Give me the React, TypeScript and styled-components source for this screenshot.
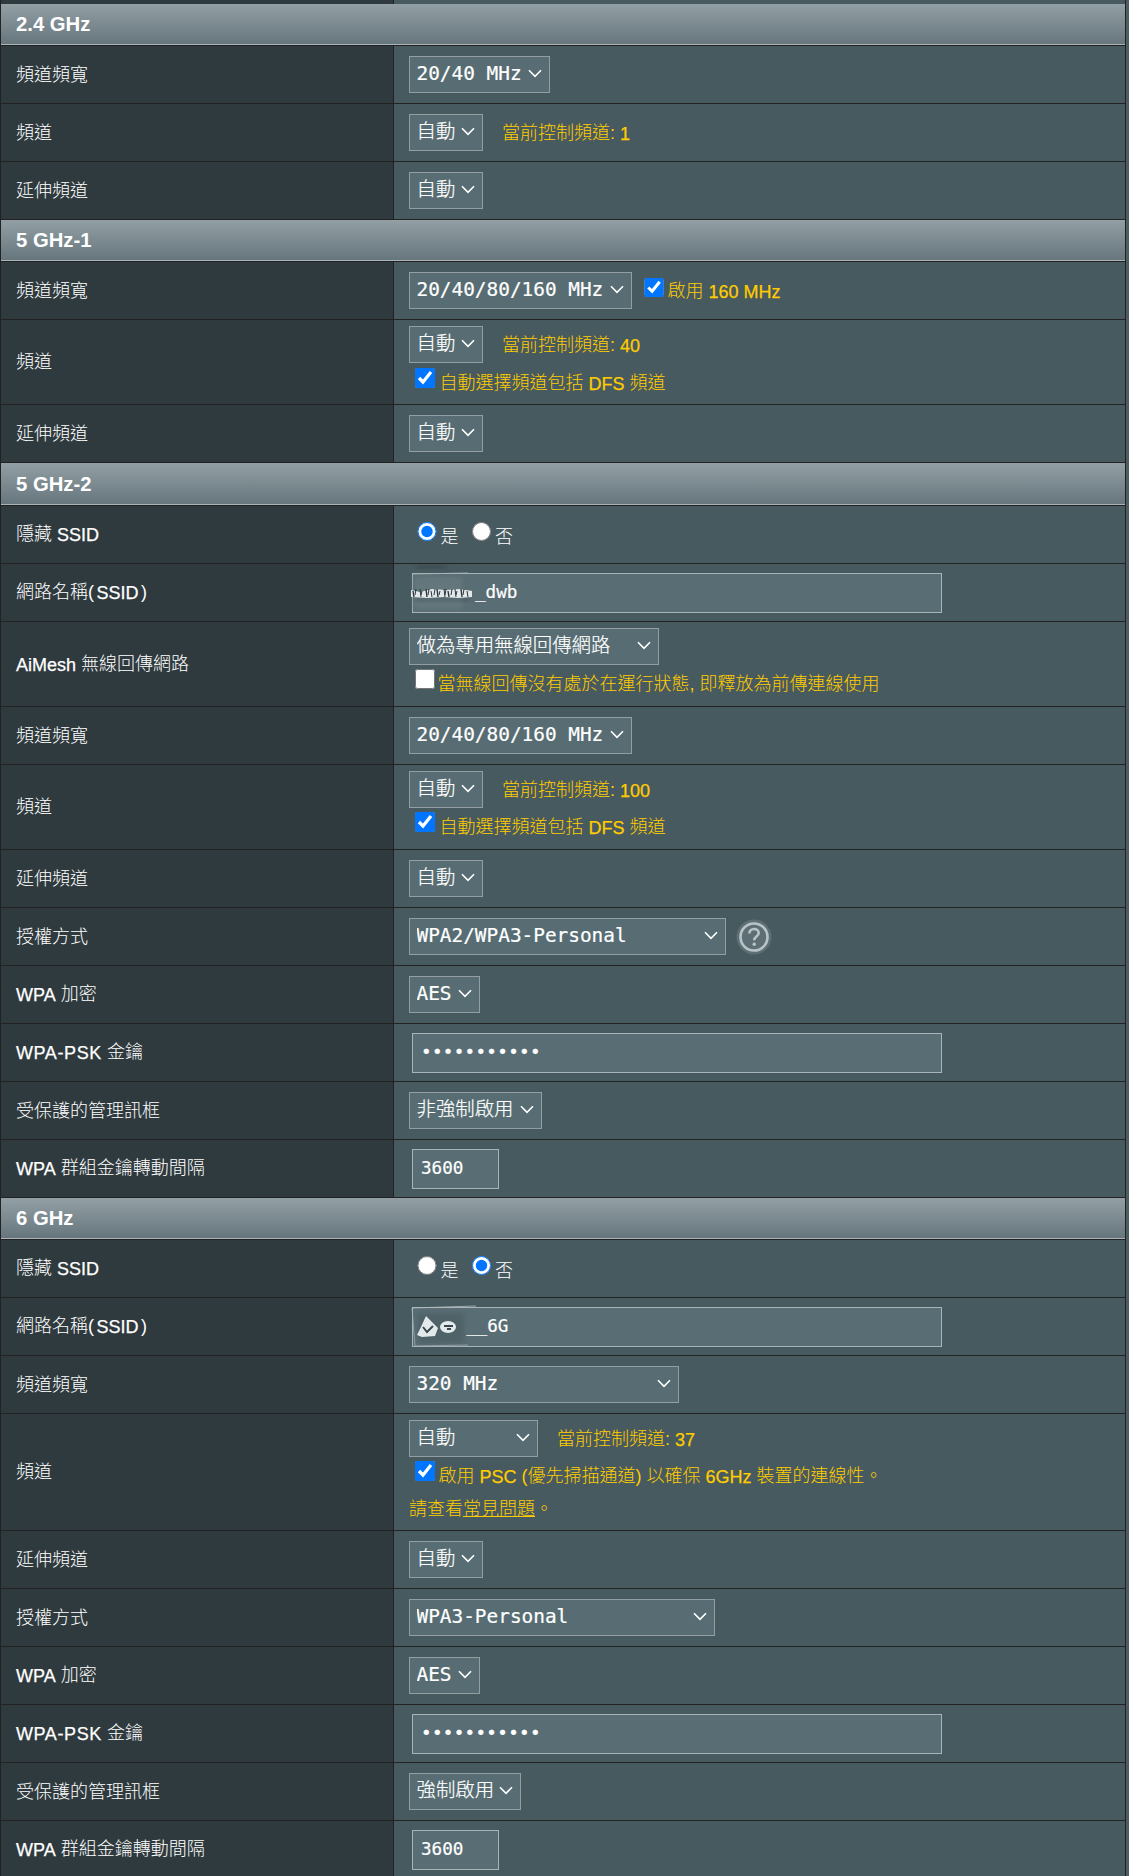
import React from "react";
import styled, { createGlobalStyle } from "styled-components";

const chevron =
  "data:image/svg+xml,%3Csvg xmlns='http://www.w3.org/2000/svg' width='14' height='9' viewBox='0 0 14 9'%3E%3Cpath d='M1 1.2 L7 7.4 L13 1.2' fill='none' stroke='%23ffffff' stroke-width='1.6'/%3E%3C/svg%3E";

const Global = createGlobalStyle`
  html, body { margin: 0; padding: 0; background: #4D5E63; }
  body { width: 1129px; height: 1876px; overflow: hidden; }
`;

const Frame = styled.div`
  width: 1126px;
  height: 1876px;
  overflow: hidden;
  box-sizing: border-box;
  border-left: 1px solid #222;
  border-right: 1px solid #222;
  font-family: "Liberation Sans", "Noto Sans CJK TC", sans-serif;
  font-size: 18px;
  font-weight: 300;
  color: #fff;
`;

const RowBox = styled.div<{ $h: number }>`
  display: grid;
  grid-template-columns: 393px 1fr;
  height: ${(p) => p.$h}px;
  box-sizing: border-box;
  border-bottom: 1px solid #222;
`;

const Label = styled.div`
  display: flex;
  align-items: baseline;
  align-content: center;
  flex-wrap: wrap;
  padding: 0 0 4px 15px;
  background: #2f3a3e;
  border-right: 1px solid #222;
  white-space: pre;
`;

const Value = styled.div<{ $tall?: boolean }>`
  display: flex;
  flex-direction: column;
  justify-content: ${(p) => (p.$tall ? "flex-start" : "center")};
  align-items: flex-start;
  padding: ${(p) => (p.$tall ? "6px" : "0")} 0 0 15px;
  background: #475a5f;
`;

const Line = styled.div`
  display: flex;
  align-items: center;
`;

const Header = styled.div<{ $h?: number }>`
  display: flex;
  align-items: center;
  height: ${(p) => p.$h ?? 42}px;
  box-sizing: border-box;
  padding: 0 0 0 15px;
  background: linear-gradient(#92a0a5, #66757c);
  border-bottom: 1px solid #222;
  box-shadow: inset 0 -1px 0 #a9b4b8;
  font-size: 20.3px;
  font-weight: bold;
  color: #fff;
`;

const Select = styled.select<{ $w: number }>`
  appearance: none;
  width: ${(p) => p.$w}px;
  height: 37px;
  box-sizing: border-box;
  margin: 0;
  padding: 0 0 2px 6.5px;
  border: 1px solid #929ea1;
  border-radius: 0;
  outline: none;
  color: #fff;
  background: #576d73 url("${chevron}") no-repeat right 7px top 12px;
  font-family: "DejaVu Sans Mono", "Noto Sans CJK TC", monospace;
  font-size: 19.4px;
  font-weight: 300;
  -webkit-text-stroke: 0.2px #fff;
`;

const InputWrap = styled.div<{ $w: number }>`
  position: relative;
  width: ${(p) => p.$w}px;
  margin-left: 3px;
`;

const TextInput = styled.input<{ $pad?: number; $ls?: number }>`
  display: block;
  width: 100%;
  height: 40px;
  box-sizing: border-box;
  margin: 0;
  padding: 0 0 2px ${(p) => p.$pad ?? 8}px;
  border: 1px solid #a9b4b8;
  border-radius: 0;
  outline: none;
  color: #fff;
  background: #596d74;
  font-family: "DejaVu Sans Mono", monospace;
  font-size: 17.6px;
  letter-spacing: ${(p) => p.$ls ?? 0}px;
  -webkit-text-stroke: 0.2px #fff;
`;

const Smudge = styled.svg`
  position: absolute;
  left: -4px;
  top: -12px;
  overflow: visible;
  pointer-events: none;
`;

const Note = styled.span<{ $ml?: number; $up?: number }>`
  color: #ffcc00;
  margin-left: ${(p) => p.$ml ?? 0}px;
  margin-bottom: ${(p) => p.$up ?? 0}px;
  white-space: pre;
`;

const Lat = styled.span<{ $ls?: number; $px?: number }>`
  -webkit-text-stroke: 0.25px currentColor;
  letter-spacing: ${(p) => p.$ls ?? 0}px;
  padding: 0 ${(p) => p.$px ?? 0}px;
  vertical-align: -1px;
`;

const Check = styled.input.attrs({ type: "checkbox" })<{ $mr?: number; $ml?: number }>`
  width: 19.5px;
  height: 19.5px;
  flex: none;
  margin: 0 ${(p) => p.$mr ?? 5}px 6px ${(p) => p.$ml ?? 6}px;
`;

const Radio = styled.input.attrs({ type: "radio" })<{ $ml?: number }>`
  width: 19.5px;
  height: 19.5px;
  flex: none;
  margin: 0 4px 6px ${(p) => p.$ml ?? 8}px;
`;

const RadioText = styled.span`
  color: #fff;
`;

const Stacked = styled(Line)<{ $mt: number }>`
  margin-top: ${(p) => p.$mt}px;
  height: 24px;
`;

const Link = styled.a`
  color: #ffcc00;
  text-decoration: underline;
`;

const HelpIcon = styled.svg`
  margin-left: 10px;
  flex: none;
`;

const Row = ({ label, h = 58, tall, children }: { label?: React.ReactNode; h?: number; tall?: boolean; children?: React.ReactNode }) => (
  <RowBox $h={h}>
    <Label><span>{label}</span></Label>
    <Value $tall={tall}>{children}</Value>
  </RowBox>
);

const Sel = ({ w, v }: { w: number; v: string }) => (
  <Select $w={w} defaultValue={v}>
    <option>{v}</option>
  </Select>
);

const Auto = ({ w = 74 }: { w?: number }) => <Sel w={w} v="自動" />;

const Channel = ({ n, w }: { n: string; w?: number }) => (
  <Line>
    <Auto w={w} />
    <Note $ml={19} $up={3}>
      當前控制頻道: <Lat>{n}</Lat>
    </Note>
  </Line>
);

const Dfs = ({ mt = 5 }: { mt?: number }) => (
  <Stacked $mt={mt}>
    <Check defaultChecked />
    <Note>
      自動選擇頻道包括 <Lat>DFS</Lat> 頻道
    </Note>
  </Stacked>
);

const Help = () => (
  <HelpIcon width="36" height="36" viewBox="0 0 36 36">
    <circle cx="18" cy="18" r="17.5" fill="#5d6f74" />
    <circle cx="18" cy="18" r="13.5" fill="none" stroke="#b9c4c7" strokeWidth="2.6" />
    <path d="M13.4 14.6c0-2.8 2-4.6 4.7-4.6s4.6 1.7 4.6 4c0 3.6-4.5 3.6-4.5 7.2" fill="none" stroke="#b9c4c7" strokeWidth="2.6" />
    <circle cx="18.2" cy="25.2" r="1.7" fill="#b9c4c7" />
  </HelpIcon>
);

const jag = [4, 7, 11, 13, 17, 20, 22, 26, 28, 31, 35, 37, 39, 43, 46, 48, 52, 55, 58];

const DwbSmudge = () => (
  <Smudge width="74" height="66" viewBox="0 0 74 66">
    <defs>
      <filter id="b1" x="-30%" y="-60%" width="160%" height="220%"><feGaussianBlur stdDeviation="2" /></filter>
      <filter id="b2" x="-10%" y="-60%" width="120%" height="220%"><feGaussianBlur stdDeviation="0.5" /></filter>
    </defs>
    <rect x="6" y="16" width="48" height="32" fill="#64777d" filter="url(#b1)" />
    <rect x="8" y="5" width="30" height="2" fill="#333f43" filter="url(#b1)" />
    <rect x="8" y="37" width="54" height="3" fill="#3f4f54" opacity="0.6" filter="url(#b1)" />
    <path d="M4 13 L60 12" stroke="#aab5b8" strokeWidth="1.2" opacity="0.8" filter="url(#b2)" />
    <path d="M3 50.5 L58 50.5" stroke="#c0cacc" strokeWidth="1.4" filter="url(#b2)" />
    <g filter="url(#b2)">
      <path d="M3 29 L12 31 L24 28 L38 29 L52 28 L64 30 L64 36 L50 37 L36 36 L20 37 L3 36 Z" fill="#e2e8ea" />
      {jag.map((x, i) => (
        <path
          key={x}
          d={`M${x + 1} ${i % 3 === 0 ? 30 : 28} L${x + (i % 2 ? 0 : 2)} ${i % 2 === 0 ? 36 : 34}`}
          stroke="#2b363a"
          strokeWidth={i % 4 === 0 ? 1.4 : 1}
        />
      ))}
    </g>
  </Smudge>
);

const SixGSmudge = () => (
  <Smudge width="74" height="66" viewBox="0 0 74 66">
    <defs>
      <filter id="b3" x="-30%" y="-60%" width="160%" height="220%"><feGaussianBlur stdDeviation="2.4" /></filter>
      <filter id="b4" x="-30%" y="-30%" width="160%" height="160%"><feGaussianBlur stdDeviation="0.6" /></filter>
    </defs>
    <rect x="10" y="18" width="46" height="30" fill="#4f6268" filter="url(#b3)" />
    <path d="M4 13 L68 11" stroke="#b4bfc1" strokeWidth="1.2" opacity="0.8" filter="url(#b4)" />
    <path d="M4 13 L7 51 L60 50" fill="none" stroke="#a9b4b8" strokeWidth="1" opacity="0.7" />
    <path d="M9 40 L12 34 L18 21 L30 33 L27 41 L14 42 Z" fill="#e4eaeb" filter="url(#b4)" />
    <path d="M15 32 L19 37 L25 31" fill="none" stroke="#39464a" strokeWidth="2" filter="url(#b4)" />
    <ellipse cx="40" cy="32" rx="8" ry="6" fill="#e4eaeb" filter="url(#b4)" />
    <path d="M36 31 L45 31 M39 34 L43 34" stroke="#39464a" strokeWidth="1.8" filter="url(#b4)" />
  </Smudge>
);

const Ssid = ({ value, pad, smudge }: { value: string; pad: number; smudge: React.ReactNode }) => (
  <InputWrap $w={530}>
    <TextInput defaultValue={value} $pad={pad} />
    {smudge}
  </InputWrap>
);

const HideSsid = ({ yes }: { yes: boolean }) => (
  <Line>
    <Radio name={yes ? "h1" : "h2"} defaultChecked={yes} />
    <RadioText>是</RadioText>
    <Radio name={yes ? "h1" : "h2"} defaultChecked={!yes} $ml={13} />
    <RadioText>否</RadioText>
  </Line>
);

const Psk = () => (
  <InputWrap $w={530}>
    <TextInput type="password" defaultValue="aaaaaaaaaaa" $pad={8} $ls={0.3} />
  </InputWrap>
);

const Interval = () => (
  <InputWrap $w={87}>
    <TextInput defaultValue="3600" />
  </InputWrap>
);

const SsidLabel = () => <>網路名稱(<Lat $px={2.5}>SSID</Lat>)</>;
const HideLabel = () => <>隱藏 <Lat>SSID</Lat></>;
const PskLabel = () => <><Lat $ls={0.6}>WPA-PSK</Lat> 金鑰</>;
const WpaLabel = () => <><Lat>WPA</Lat> 加密</>;
const IntervalLabel = () => <><Lat>WPA</Lat> 群組金鑰轉動間隔</>;

export default function App() {
  return (
    <Frame>
      <Global />
      <Row h={4} />

      <Header>2.4 GHz</Header>
      <Row label="頻道頻寬"><Sel w={141} v="20/40 MHz" /></Row>
      <Row label="頻道"><Channel n="1" /></Row>
      <Row label="延伸頻道"><Auto /></Row>

      <Header>5 GHz-1</Header>
      <Row label="頻道頻寬">
        <Line>
          <Sel w={223} v="20/40/80/160 MHz" />
          <Check defaultChecked $ml={12} $mr={4} />
          <Note $up={3}>啟用 <Lat>160 MHz</Lat></Note>
        </Line>
      </Row>
      <Row label="頻道" h={85} tall>
        <Channel n="40" />
        <Dfs mt={6} />
      </Row>
      <Row label="延伸頻道"><Auto /></Row>

      <Header $h={43}>5 GHz-2</Header>
      <Row label={<HideLabel />}><HideSsid yes /></Row>
      <Row label={<SsidLabel />}>
        <Ssid value="_dwb" pad={62} smudge={<DwbSmudge />} />
      </Row>
      <Row label={<><Lat>AiMesh</Lat> 無線回傳網路</>} h={85} tall>
        <Sel w={250} v="做為專用無線回傳網路" />
        <Stacked $mt={5}>
          <Check $mr={3} />
          <Note>當無線回傳沒有處於在運行狀態, 即釋放為前傳連線使用</Note>
        </Stacked>
      </Row>
      <Row label="頻道頻寬"><Sel w={223} v="20/40/80/160 MHz" /></Row>
      <Row label="頻道" h={85} tall>
        <Channel n="100" />
        <Dfs />
      </Row>
      <Row label="延伸頻道"><Auto /></Row>
      <Row label="授權方式">
        <Line>
          <Sel w={317} v="WPA2/WPA3-Personal" />
          <Help />
        </Line>
      </Row>
      <Row label={<WpaLabel />}><Sel w={71} v="AES" /></Row>
      <Row label={<PskLabel />}><Psk /></Row>
      <Row label="受保護的管理訊框"><Sel w={133} v="非強制啟用" /></Row>
      <Row label={<IntervalLabel />}><Interval /></Row>

      <Header>6 GHz</Header>
      <Row label={<HideLabel />}><HideSsid yes={false} /></Row>
      <Row label={<SsidLabel />}>
        <Ssid value="__6G" pad={53} smudge={<SixGSmudge />} />
      </Row>
      <Row label="頻道頻寬"><Sel w={270} v="320 MHz" /></Row>
      <Row label="頻道" h={117} tall>
        <Channel n="37" w={129} />
        <Stacked $mt={5}>
          <Check defaultChecked $mr={4} />
          <Note>啟用 <Lat>PSC</Lat> (優先掃描通道) 以確保 <Lat>6GHz</Lat> 裝置的連線性。</Note>
        </Stacked>
        <Stacked $mt={9}>
          <Note>請查看<Link href="#">常見問題</Link>。</Note>
        </Stacked>
      </Row>
      <Row label="延伸頻道"><Auto /></Row>
      <Row label="授權方式"><Sel w={306} v="WPA3-Personal" /></Row>
      <Row label={<WpaLabel />}><Sel w={71} v="AES" /></Row>
      <Row label={<PskLabel />}><Psk /></Row>
      <Row label="受保護的管理訊框"><Sel w={112} v="強制啟用" /></Row>
      <Row label={<IntervalLabel />}><Interval /></Row>
    </Frame>
  );
}
